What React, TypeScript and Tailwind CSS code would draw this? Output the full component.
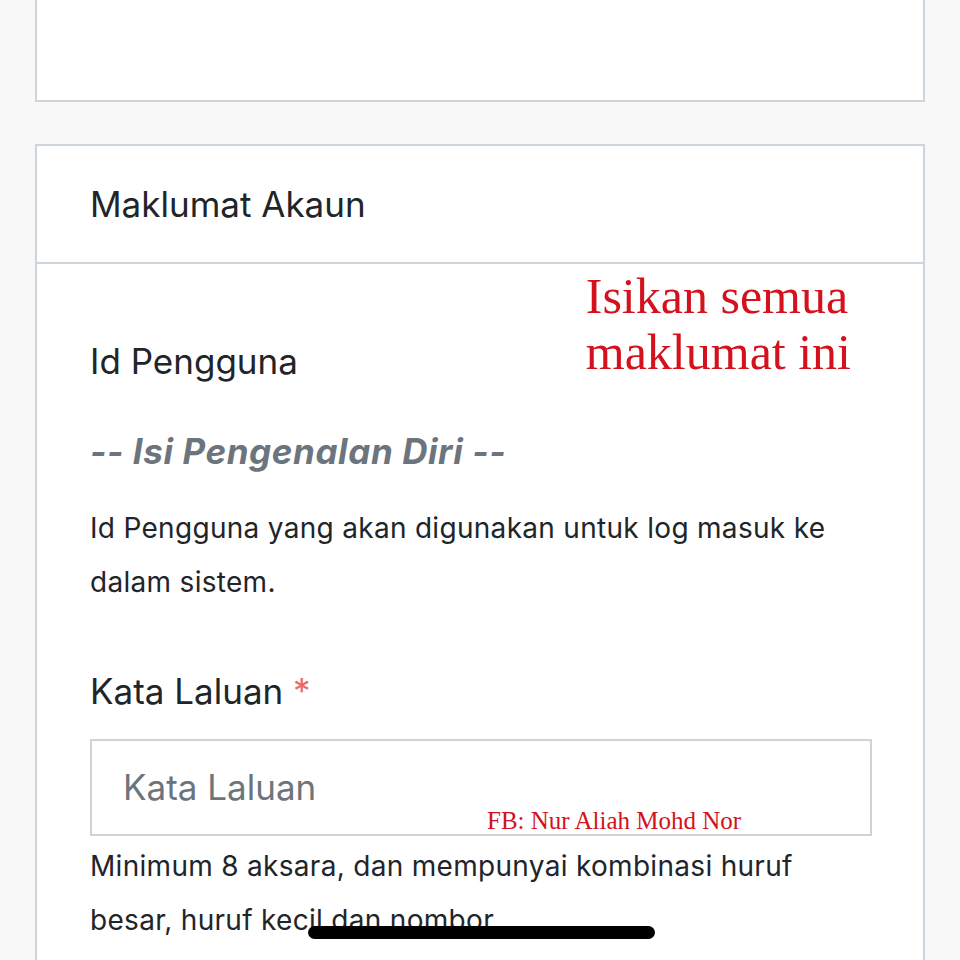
import React from "react";

export default function App() {
  const sans = { fontFamily: "Inter, 'Noto Sans', sans-serif" };
  return (
    <div className="relative h-[960px] w-[960px] overflow-hidden bg-[#f8f8f8]" style={sans}>
      <div className="flex flex-col gap-[42px] px-[35px]">
        {/* top card */}
        <div className="h-[102px] border-x-2 border-b-2 border-[#cdd5dc] bg-white" />
        {/* account card */}
        <div className="h-[900px] border-2 border-[#cdd5dc] bg-white">
          <div className="flex h-[118px] items-center border-b-2 border-[#cdd5dc] px-[53px]">
            <span className="text-[35px] text-[#212529]">Maklumat Akaun</span>
          </div>
          <div className="relative pl-[53px] pr-[51px] pt-[75px]">
            <div className="absolute right-[72px] top-[4px] whitespace-nowrap text-[50px] leading-[56px] text-[#d4111c]" style={{ fontFamily: "'Liberation Serif', serif" }}>
              <div>Isikan semua</div>
              <div>maklumat ini</div>
            </div>
            <div className="text-[35px] leading-[44px] text-[#212529]">Id Pengguna</div>
            <div className="mt-[46px] text-[35px] font-bold italic leading-[44px] tracking-[0.6px] text-[#6c757d]">-- Isi Pengenalan Diri --</div>
            <div className="mt-[28px] text-[28px] leading-[54px] tracking-[0.3px] text-[#212529]">
              Id Pengguna yang akan digunakan untuk log masuk ke
              <br />
              dalam sistem.
            </div>
            <div className="mt-[60px] text-[35px] leading-[44px] text-[#212529]">
              Kata Laluan <span className="text-[#e66a6a]">*</span>
            </div>
            <div className="relative mt-[26px] flex h-[97px] items-center border-2 border-[#cdd5dc] px-[31px]">
              <span className="text-[35px] text-[#6c757d]">Kata Laluan</span>
              <span className="absolute left-[395px] top-[66px] whitespace-nowrap text-[25px] leading-[28px] text-[#d4111c]" style={{ fontFamily: "'Liberation Serif', serif" }}>
                FB: Nur Aliah Mohd Nor
              </span>
            </div>
            <div className="mt-[3px] text-[28px] leading-[54px] tracking-[0.3px] text-[#212529]">
              Minimum 8 aksara, dan mempunyai kombinasi huruf
              <br />
              besar, huruf kecil dan nombor.
            </div>
          </div>
        </div>
      </div>
      <div className="absolute left-[308px] top-[926px] h-[13px] w-[347px] rounded-full bg-black" />
    </div>
  );
}
